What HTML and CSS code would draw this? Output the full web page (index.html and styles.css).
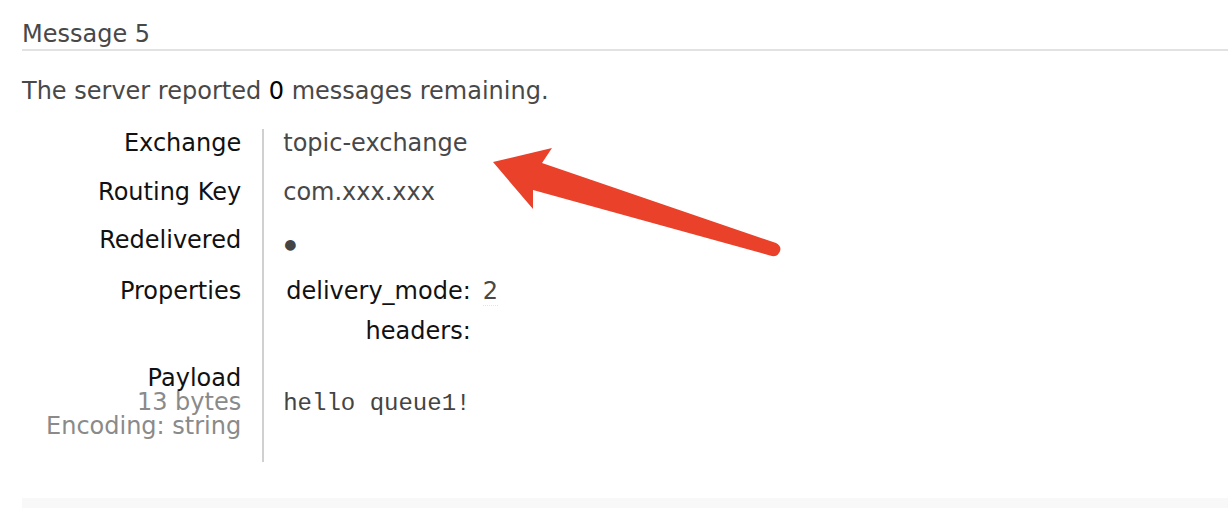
FILE: index.html
```html
<!DOCTYPE html>
<html>
<head>
<meta charset="utf-8">
<link rel="stylesheet" href="styles.css">
</head>
<body>
<div class="page">
  <h3 class="msg-title">Message 5</h3>
  <p class="remaining">The server reported <span class="num">0</span> messages remaining.</p>
  <table class="facts">
    <tr class="first-row">
      <th>Exchange</th>
      <td>topic-exchange</td>
    </tr>
    <tr>
      <th>Routing Key</th>
      <td>com.xxx.xxx</td>
    </tr>
    <tr>
      <th>Redelivered</th>
      <td><span class="bullet">●</span></td>
    </tr>
    <tr class="props-row">
      <th>Properties</th>
      <td>
        <table class="props">
          <tr><th>delivery_mode:</th><td><abbr class="val">2</abbr></td></tr>
          <tr class="last"><th>headers:</th><td></td></tr>
        </table>
      </td>
    </tr>
    <tr class="payload-row">
      <th>Payload<br><span class="sub">13 bytes</span><br><span class="sub">Encoding: string</span></th>
      <td class="payload"><pre>hello queue1!</pre></td>
    </tr>
  </table>
  <div class="footer-bar"></div>
</div>
<svg class="arrow" width="1228" height="508" viewBox="0 0 1228 508">
  <path d="M493 162 L552 148 L542 163 L776 243 Q783 247 779 253 Q776 258 770 255.5 L533 190 L533 209 Z" fill="#e9412a"/>
</svg>
</body>
</html>
```
FILE: styles.css
```css
html, body {
  margin: 0;
  padding: 0;
  background: #fff;
}
body {
  font-family: "DejaVu Sans", Verdana, sans-serif;
  font-size: 24px;
  line-height: 24px;
  color: #484848;
  overflow: hidden;
  width: 1228px;
  height: 508px;
}
.page {
  padding: 22px 0 0 22px;
}
.msg-title {
  margin: 0;
  font-size: 24px;
  font-weight: normal;
  line-height: 24px;
  color: #484848;
  padding: 0 0 3px 0;
  border-bottom: 2px solid #e2e2e2;
}
.remaining {
  margin: 28px 0 26px 0;
}
.num {
  color: #000;
}
.facts {
  border-collapse: collapse;
  border-spacing: 0;
}
.facts > tbody > tr > th {
  font-weight: normal;
  color: #111;
  text-align: right;
  vertical-align: top;
  padding: 4px 21px 20px 24px;
  border-right: 2px solid #d0d0d0;
  white-space: nowrap;
}
.facts > tbody > tr > td {
  vertical-align: top;
  padding: 4px 20px 20px 19px;
  color: #484848;
}
.facts > tbody > tr.first-row > th,
.facts > tbody > tr.first-row > td {
  padding-top: 2px;
  padding-bottom: 21px;
}
.facts > tbody > tr.props-row > th,
.facts > tbody > tr.props-row > td {
  padding-bottom: 19px;
}
.bullet {
  font-size: 14px;
  color: #444;
  position: relative;
  top: 1px;
  left: 1px;
}
.props {
  border-collapse: collapse;
  margin-left: 1px;
}
.props th {
  font-weight: normal;
  color: #111;
  text-align: right;
  padding: 0 12px 16px 2px;
  vertical-align: top;
}
.props td {
  padding: 0 0 16px 0;
  vertical-align: top;
  color: #484848;
}
.props tr.last th, .props tr.last td {
  padding-bottom: 0;
}
.val {
  text-decoration: none;
  border-bottom: 1px dotted #e4e4e4;
}
.sub {
  color: #8a8a8a;
}
.facts > tbody > tr.payload-row > th {
  padding-bottom: 24px;
}
.facts > tbody > tr > td.payload {
  vertical-align: middle;
}
.payload pre {
  margin: 0;
  font-family: "Liberation Mono", "Courier New", monospace;
  font-size: 24px;
  line-height: 24px;
  color: #444;
}
.footer-bar {
  margin-top: 36px;
  height: 20px;
  background: #f8f8f8;
}
.arrow {
  position: absolute;
  left: 0;
  top: 0;
  pointer-events: none;
}
```
